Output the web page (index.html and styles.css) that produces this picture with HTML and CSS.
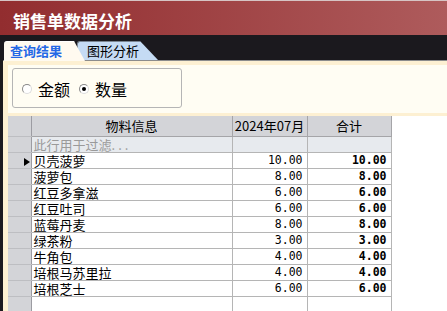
FILE: index.html
```html
<!DOCTYPE html>
<html lang="zh-CN">
<head>
  <meta charset="UTF-8">
  <title>销售单数据分析</title>
  <link rel="stylesheet" href="styles.css">
</head>
<body>
  <div class="titlebar">销售单数据分析</div>

  <div class="tabs">
    <div class="tab active">查询结果</div>
    <div class="tab other">图形分析</div>
  </div>

  <div class="panel">
    <div class="options">
      <div class="groupbox">
        <label class="radio"><span class="dot"></span>金额</label>
        <label class="radio checked"><span class="dot"></span>数量</label>
      </div>
    </div>

    <div class="grid-area">
      <table class="grid">
        <colgroup>
          <col class="c-hdr">
          <col class="c-name">
          <col class="c-month">
          <col class="c-total">
        </colgroup>
        <thead>
          <tr><th class="rowhdr"></th><th>物料信息</th><th>2024年07月</th><th>合计</th></tr>
        </thead>
        <tbody>
          <tr class="filter"><td class="rowhdr"></td><td class="hint">此行用于过滤<span class="dots">...</span></td><td></td><td></td></tr>
          <tr><td class="rowhdr"><span class="arrow"></span></td><td>贝壳菠萝</td><td class="num">10.00</td><td class="num total">10.00</td></tr>
          <tr><td class="rowhdr"></td><td>菠萝包</td><td class="num">8.00</td><td class="num total">8.00</td></tr>
          <tr><td class="rowhdr"></td><td>红豆多拿滋</td><td class="num">6.00</td><td class="num total">6.00</td></tr>
          <tr><td class="rowhdr"></td><td>红豆吐司</td><td class="num">6.00</td><td class="num total">6.00</td></tr>
          <tr><td class="rowhdr"></td><td>蓝莓丹麦</td><td class="num">8.00</td><td class="num total">8.00</td></tr>
          <tr><td class="rowhdr"></td><td>绿茶粉</td><td class="num">3.00</td><td class="num total">3.00</td></tr>
          <tr><td class="rowhdr"></td><td>牛角包</td><td class="num">4.00</td><td class="num total">4.00</td></tr>
          <tr><td class="rowhdr"></td><td>培根马苏里拉</td><td class="num">4.00</td><td class="num total">4.00</td></tr>
          <tr><td class="rowhdr"></td><td>培根芝士</td><td class="num">6.00</td><td class="num total">6.00</td></tr>
          <tr><td class="rowhdr"></td><td></td><td></td><td></td></tr>
        </tbody>
      </table>
    </div>
  </div>
</body>
</html>
```

FILE: styles.css
```css
html, body {
  margin: 0;
  padding: 0;
}

body {
  width: 447px;
  height: 311px;
  overflow: hidden;
  background-color: #1b191e;
  font-family: "Noto Sans CJK SC", "Noto Sans", sans-serif;
  color: #000;
}

.titlebar {
  height: 35px;
  box-sizing: border-box;
  padding: 9px 0 0 13px;
  border-top: 1px solid #d6c4c4;
  background: linear-gradient(to right, #922d2f, #ae5b5c);
  color: #fff;
  font-size: 17px;
  font-weight: bold;
  line-height: 22px;
}

.tabs {
  height: 25px;
  display: flex;
  align-items: flex-end;
  padding-left: 4px;
}

.tab {
  box-sizing: border-box;
  width: 81px;
  font-size: 13px;
  line-height: 17px;
  border-top-left-radius: 3px;
}

.tab.active {
  position: relative;
  z-index: 1;
  height: 20px;
  margin-bottom: -1px;
  padding-left: 6px;
  background-color: #fffaf0;
  border-top: 1px solid #ffffff;
  color: #2468e6;
  font-weight: bold;
  clip-path: polygon(0 0, calc(100% - 11px) 0, 100% 100%, 0 100%);
}

.tab.other {
  height: 19px;
  margin-left: -8px;
  padding-left: 9px;
  background-color: #c5dbf4;
  border-top: 1px solid #7a8592;
  border-left: 1px solid #7a8592;
  clip-path: polygon(0 0, calc(100% - 18px) 0, 100% 100%, 0 100%);
}

.panel {
  margin-left: 3px;
  height: 250px;
  background-color: #fdf0d2;
  border-top: 1px solid #8c8c8c;
  padding: 4px 0 0 5px;
}

.options {
  height: 48px;
  box-sizing: border-box;
  padding: 3px 0 0 4px;
  background-color: #fffdf3;
}

.groupbox {
  width: 170px;
  height: 40px;
  box-sizing: border-box;
  border: 1px solid #b5b5b5;
  border-radius: 3px;
  display: flex;
  align-items: center;
  padding: 1px 0 0 9px;
  font-size: 16px;
}

.radio {
  display: flex;
  align-items: center;
  gap: 6px;
  margin-right: 9px;
}

.dot {
  width: 10px;
  height: 10px;
  box-sizing: border-box;
  border-radius: 50%;
  border: 1px solid #8a8a8a;
  border-right-color: #dcdcdc;
  border-bottom-color: #dcdcdc;
  background-color: #fff;
  display: flex;
  align-items: center;
  justify-content: center;
}

.radio.checked .dot::after {
  content: "";
  width: 4px;
  height: 4px;
  border-radius: 50%;
  background-color: #000;
}

.grid-area {
  margin-top: 3px;
  height: 200px;
  background-color: #fff;
}

.grid {
  table-layout: fixed;
  border-collapse: collapse;
  width: 383px;
  font-size: 13px;
}

.c-hdr { width: 23px; }
.c-name { width: 201px; }
.c-month { width: 75px; }
.c-total { width: 84px; }

.grid th,
.grid td {
  padding: 0;
  border-right: 1px solid #b5b5b5;
  border-bottom: 1px solid #b5b5b5;
  white-space: nowrap;
  overflow: hidden;
  line-height: 15px;
}

.grid thead tr {
  height: 20px;
}

.grid tbody tr {
  height: 16px;
}

.grid th {
  background-color: #d3d4d8;
  font-weight: normal;
  text-align: center;
  border-right-color: #a5a5a8;
  border-bottom-color: #a5a5a8;
}

.grid td {
  padding-left: 2px;
}

.grid .rowhdr {
  background-color: #d3d4d8;
  border-right-color: #9c9ca2;
  border-bottom-color: #bdbec2;
  text-align: right;
  padding: 0 1px 0 0;
}

.filter td {
  background-color: #e7eaee;
}

.hint {
  color: #9a9a9a;
}

.dots {
  letter-spacing: 3px;
}

.arrow {
  display: inline-block;
  vertical-align: middle;
  width: 0;
  height: 0;
  border-left: 6px solid #000;
  border-top: 4px solid transparent;
  border-bottom: 4px solid transparent;
}

.grid td.num {
  text-align: right;
  padding: 0 4px 0 0;
  font-family: "DejaVu Sans Mono", monospace;
  font-size: 11.5px;
}

.grid td.total {
  font-weight: bold;
}
```
